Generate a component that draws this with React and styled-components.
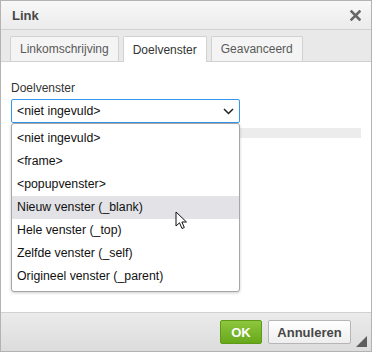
import styled, { createGlobalStyle } from 'styled-components';

const GlobalStyle = createGlobalStyle`
  html, body {
    margin: 0;
    padding: 0;
    background: #ffffff;
  }
  body {
    font-family: 'Liberation Sans', Arial, sans-serif;
  }
`;

const options = [
  '<niet ingevuld>',
  '<frame>',
  '<popupvenster>',
  'Nieuw venster (_blank)',
  'Hele venster (_top)',
  'Zelfde venster (_self)',
  'Origineel venster (_parent)',
];

const tabs = ['Linkomschrijving', 'Doelvenster', 'Geavanceerd'];

const App = () => {
  return (
    <>
      <GlobalStyle />
      <Dialog>
        <TitleBar>
          <Title>Link</Title>
          <Close>
            <svg width="11" height="11" viewBox="0 0 11 11">
              <path d="M1.5 1.5 L9.5 9.5 M9.5 1.5 L1.5 9.5" stroke="#686868" strokeWidth="2.6" strokeLinecap="square" />
            </svg>
          </Close>
        </TitleBar>
        <TabBar>
          {tabs.map(t => (
            <Tab key={t} active={t === 'Doelvenster'}>
              {t}
            </Tab>
          ))}
        </TabBar>
        <Content>
          <Label>Doelvenster</Label>
          <SelectBox>
            <span>&lt;niet ingevuld&gt;</span>
            <svg width="11" height="7" viewBox="0 0 11 7">
              <path d="M1 1 L5.5 5.5 L10 1" fill="none" stroke="#222" strokeWidth="1.5" />
            </svg>
          </SelectBox>
          <GreyBar />
          <DropList>
            {options.map(o => (
              <Option key={o} hover={o === 'Nieuw venster (_blank)'}>
                {o}
              </Option>
            ))}
          </DropList>
          <Pointer width="13" height="19" viewBox="0 0 13 19">
            <path
              d="M1 1 L1 15 L4.5 11.8 L7 17.5 L9.3 16.5 L6.9 11 L11.5 11 Z"
              fill="#ffffff"
              stroke="#111"
              strokeWidth="1"
              strokeLinejoin="round"
            />
          </Pointer>
        </Content>
        <Footer>
          <OkButton>OK</OkButton>
          <CancelButton>Annuleren</CancelButton>
          <Grip width="11" height="11" viewBox="0 0 11 11">
            <path d="M11 0 L11 11 L0 11 Z" fill="#5d5d5d" />
          </Grip>
        </Footer>
      </Dialog>
    </>
  );
};

const Dialog = styled.div`
  width: 372px;
  height: 352px;
  box-sizing: border-box;
  border: 1px solid #b3b3b3;
  display: flex;
  flex-direction: column;
  background: #fff;
`;

const TitleBar = styled.div`
  height: 28px;
  display: flex;
  align-items: center;
  justify-content: space-between;
  padding: 0 10px 0 11px;
  background: linear-gradient(#f8f8f8, #ebebeb);
  border-bottom: 1px solid #d1d1d1;
`;

const Title = styled.div`
  font-size: 13px;
  font-weight: bold;
  color: #474747;
`;

const Close = styled.div`
  display: flex;
  align-items: center;
`;

const TabBar = styled.div`
  display: flex;
  align-items: flex-end;
  gap: 4px;
  height: 31px;
  padding-left: 9px;
  background: #e9e9e9;
  border-bottom: 1px solid #d1d1d1;
`;

const Tab = styled.div`
  box-sizing: border-box;
  padding: 0 9px;
  display: flex;
  align-items: center;
  font-size: 12px;
  color: ${({ active }) => (active ? '#333' : '#595959')};
  background: ${({ active }) => (active ? '#ffffff' : '#f4f4f4')};
  border: 1px solid #d1d1d1;
  border-bottom: none;
  border-radius: 2px 2px 0 0;
  margin-bottom: ${({ active }) => (active ? '-1px' : '0')};
  height: ${({ active }) => (active ? '26px' : '25px')};
`;

const Content = styled.div`
  position: relative;
  flex: 1;
  padding: 19px 10px 0 10px;
  display: flex;
  flex-direction: column;
`;

const Label = styled.div`
  font-size: 12px;
  color: #333;
  line-height: 15px;
  margin-bottom: 3px;
`;

const SelectBox = styled.div`
  width: 229px;
  height: 24px;
  box-sizing: border-box;
  border: 1px solid #3396f0;
  border-radius: 2px;
  display: flex;
  align-items: center;
  justify-content: space-between;
  padding: 0 5px 0 5px;
  font-size: 12.3px;
  color: #111;
`;

const GreyBar = styled.div`
  height: 10px;
  margin-top: 5px;
  background: #ececec;
`;

const DropList = styled.div`
  position: absolute;
  left: 10px;
  top: 61px;
  width: 229px;
  box-sizing: border-box;
  padding: 3px 0;
  background: #fff;
  border: 1px solid #a6a6a6;
  border-radius: 3px;
  box-shadow: 0 1px 3px rgba(0, 0, 0, 0.2);
`;

const Option = styled.div`
  height: 23px;
  line-height: 23px;
  padding-left: 5px;
  font-size: 12.3px;
  color: #111;
  background: ${({ hover }) => (hover ? '#e2e2e7' : 'transparent')};
`;

const Pointer = styled.svg`
  position: absolute;
  left: 174px;
  top: 149px;
`;

const Footer = styled.div`
  position: relative;
  height: 38px;
  display: flex;
  align-items: center;
  justify-content: flex-end;
  gap: 6px;
  padding-right: 20px;
  border-top: 1px solid #d1d1d1;
  background: linear-gradient(#ebebeb, #dcdcdc);
`;

const Btn = styled.div`
  height: 24px;
  box-sizing: border-box;
  display: flex;
  align-items: center;
  justify-content: center;
  font-size: 13px;
  font-weight: bold;
  border-radius: 2px;
`;

const OkButton = styled(Btn)`
  width: 42px;
  color: #fff;
  background: linear-gradient(#8dc63f, #67a81a);
  border: 1px solid #5d9a16;
`;

const CancelButton = styled(Btn)`
  width: 83px;
  color: #474747;
  background: linear-gradient(#ffffff, #eeeeee);
  border: 1px solid #b6b6b6;
`;

const Grip = styled.svg`
  position: absolute;
  right: 4px;
  bottom: 4px;
`;

export default App;
